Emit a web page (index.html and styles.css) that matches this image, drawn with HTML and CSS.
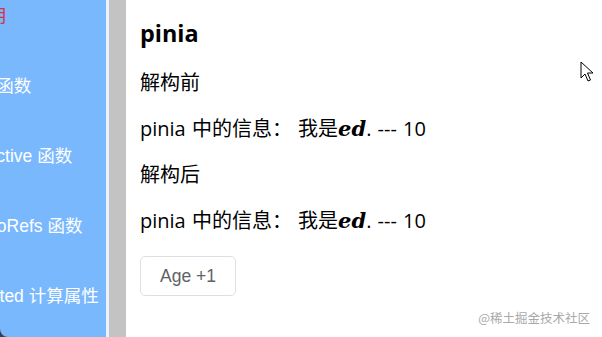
FILE: index.html
```html
<!DOCTYPE html>
<html lang="zh-CN">
<head>
    <meta charset="UTF-8">
    <meta name="viewport" content="width=device-width, initial-scale=1.0">
    <title>pinia</title>
    <link rel="stylesheet" href="styles.css">
</head>
<body>
    <div class="app">
        <aside class="aside">
            <ul class="menu">
                <li class="menu-item lv2 active">说明</li>
                <li class="menu-item lv2">ref 函数</li>
                <li class="menu-item lv2">reactive 函数</li>
                <li class="menu-item lv3">toRefs 函数</li>
                <li class="menu-item lv1">computed 计算属性</li>
            </ul>
        </aside>
        <div class="strip"></div>
        <div class="bar"></div>
        <main class="main">
            <h3 class="title">pinia</h3>
            <p>解构前</p>
            <p>pinia 中的信息： 我是<span class="name">ed</span>. --- 10</p>
            <p>解构后</p>
            <p>pinia 中的信息： 我是<span class="name">ed</span>. --- 10</p>
            <div class="actions">
                <button class="btn">Age +1</button>
            </div>
        </main>
    </div>

    <svg class="cursor" width="14" height="22" viewBox="0 0 14 22">
        <path d="M1 1 L1 17 L5 13 L8 20 L10.5 19 L7.5 12 L13 12 Z" fill="#fff" stroke="#000" stroke-width="1" stroke-linejoin="miter"/>
    </svg>
    <div class="watermark">@稀土掘金技术社区</div>
</body>
</html>
```

FILE: styles.css
```css
body {
    margin: 0;
    padding: 0;
    height: 337px;
    overflow: hidden;
    position: relative;
    font-family: "Open Sans", "Noto Sans CJK SC", sans-serif;
}

.app {
    display: flex;
    height: 100vh;
    background-color: #34404f;
}

.aside {
    width: 106px;
    flex-shrink: 0;
    overflow: hidden;
    background-color: #7ab8fe;
    border-bottom-left-radius: 8px;
}

.menu {
    list-style: none;
    margin: -19px 0 0 -70px;
    padding: 0;
}

.menu-item {
    height: 70px;
    line-height: 70px;
    white-space: nowrap;
    font-size: 17.5px;
    color: #fff;
    font-family: "Liberation Sans", "Noto Sans CJK SC", sans-serif;
}

.menu-item.active {
    color: #dc2c40;
}

.lv1 { padding-left: 17px; }
.lv2 { padding-left: 41px; }
.lv3 { padding-left: 62px; }

.strip {
    width: 3px;
    background-color: #e9f1fb;
}

.bar {
    width: 17px;
    background-color: #c3c3c3;
}

.main {
    flex: 1;
    background-color: #fff;
    padding: 0 14px;
    color: #000;
}

.title {
    font-size: 23.4px;
    line-height: 30px;
    margin: 18px 0 22px;
    font-weight: bold;
}

.main p {
    font-size: 20px;
    line-height: 26px;
    height: 26px;
    margin: 20px 0;
    word-spacing: 1px;
}

.name {
    font-family: "DejaVu Serif", serif;
    font-weight: bold;
    font-style: italic;
    font-size: 21px;
    line-height: 1;
}

.actions {
    margin-top: 22px;
}

.btn {
    height: 40px;
    padding: 0 19px;
    font-family: "Liberation Sans", Arial, sans-serif;
    font-size: 17.5px;
    color: #606266;
    background-color: #fff;
    border: 1px solid #dcdfe6;
    border-radius: 5px;
    cursor: pointer;
}

.cursor {
    position: absolute;
    left: 580px;
    top: 61px;
}

.watermark {
    position: absolute;
    right: 12px;
    bottom: 10px;
    font-family: "Noto Sans CJK SC", sans-serif;
    font-size: 12.5px;
    color: #a9a9a9;
}
```
